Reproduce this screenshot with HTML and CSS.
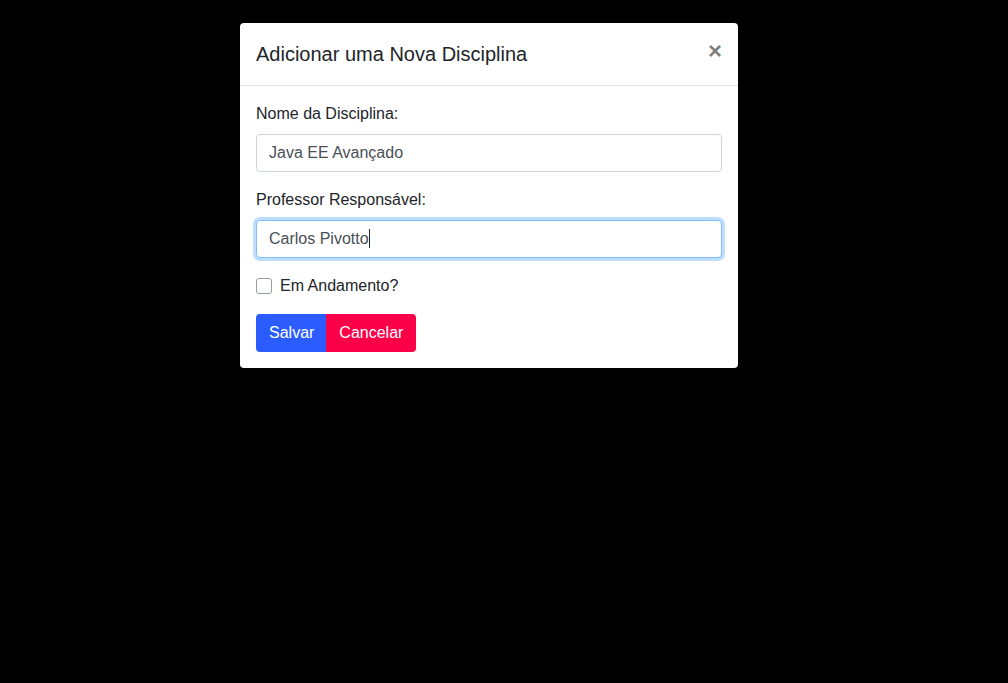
FILE: index.html
```html
<!DOCTYPE html>
<html lang="pt">
<head>
<meta charset="utf-8">
<title>Adicionar Disciplina</title>
<link rel="stylesheet" href="styles.css">
</head>
<body>
<div class="backdrop">
  <div class="modal">
    <div class="modal-header">
      <h5 class="modal-title">Adicionar uma Nova Disciplina</h5>
      <button class="close" type="button" aria-label="Fechar">&times;</button>
    </div>
    <div class="modal-body">
      <div class="form-group">
        <label class="label">Nome da Disciplina:</label>
        <div class="form-control">Java EE Avançado</div>
      </div>
      <div class="form-group">
        <label class="label">Professor Responsável:</label>
        <div class="form-control focused">Carlos Pivotto<span class="caret"></span></div>
      </div>
      <div class="form-group check-row">
        <span class="checkbox"></span>
        <label class="label check-label">Em Andamento?</label>
      </div>
      <div class="btn-group">
        <button class="btn btn-save" type="button">Salvar</button>
        <button class="btn btn-cancel" type="button">Cancelar</button>
      </div>
    </div>
  </div>
</div>
</body>
</html>
```

FILE: styles.css
```css
html, body {
  margin: 0;
  padding: 0;
  background: #000;
  height: 100%;
}
body {
  font-family: "Liberation Sans", Arial, sans-serif;
  font-size: 16px;
  line-height: 1.5;
  color: #212529;
}
.backdrop {
  padding: 23px 0 0 240px;
}
.modal {
  width: 498px;
  background: #fff;
  border-radius: 4px;
  box-sizing: border-box;
}
.modal-header {
  display: flex;
  align-items: flex-start;
  padding: 16px;
  border-bottom: 1px solid #dee2e6;
}
.modal-title {
  margin: 0;
  font-size: 20px;
  font-weight: 400;
  line-height: 30px;
  color: #212529;
}
.close {
  margin: -16px -16px -16px auto;
  padding: 16px;
  background: transparent;
  border: 0;
  font-family: "Liberation Sans", Arial, sans-serif;
  font-size: 24px;
  font-weight: 700;
  line-height: 1;
  color: #000;
  opacity: 0.5;
  cursor: pointer;
}
.modal-body {
  padding: 16px;
}
.form-group {
  margin-bottom: 16px;
}
.label {
  display: block;
  margin-bottom: 8px;
  line-height: 24px;
}
.form-control {
  height: 38px;
  box-sizing: border-box;
  padding: 6px 12px;
  border: 1px solid #ced4da;
  border-radius: 4px;
  color: #495057;
  line-height: 24px;
  background: #fff;
}
.form-control.focused {
  border-color: #80bdff;
  box-shadow: 0 0 0 3px rgba(0, 123, 255, 0.25);
}
.caret {
  display: inline-block;
  width: 1px;
  height: 19px;
  background: #212529;
  vertical-align: -4px;
}
.check-row {
  display: flex;
  align-items: center;
  gap: 8px;
}
.check-label {
  margin-bottom: 0;
}
.checkbox {
  width: 16px;
  height: 16px;
  box-sizing: border-box;
  border: 1px solid #979ca3;
  border-radius: 3px;
  background: #fff;
}
.btn-group {
  display: flex;
}
.btn {
  font-family: "Liberation Sans", Arial, sans-serif;
  font-size: 16px;
  line-height: 24px;
  padding: 7px 13px;
  border: 0;
  color: #fff;
  cursor: pointer;
}
.btn-save {
  padding: 7px 12px 7px 13px;
  background: #2a5cff;
  border-radius: 4px 0 0 4px;
}
.btn-cancel {
  padding: 7px 13px 7px 13px;
  background: #fb0048;
  border-radius: 0 4px 4px 0;
}
```
